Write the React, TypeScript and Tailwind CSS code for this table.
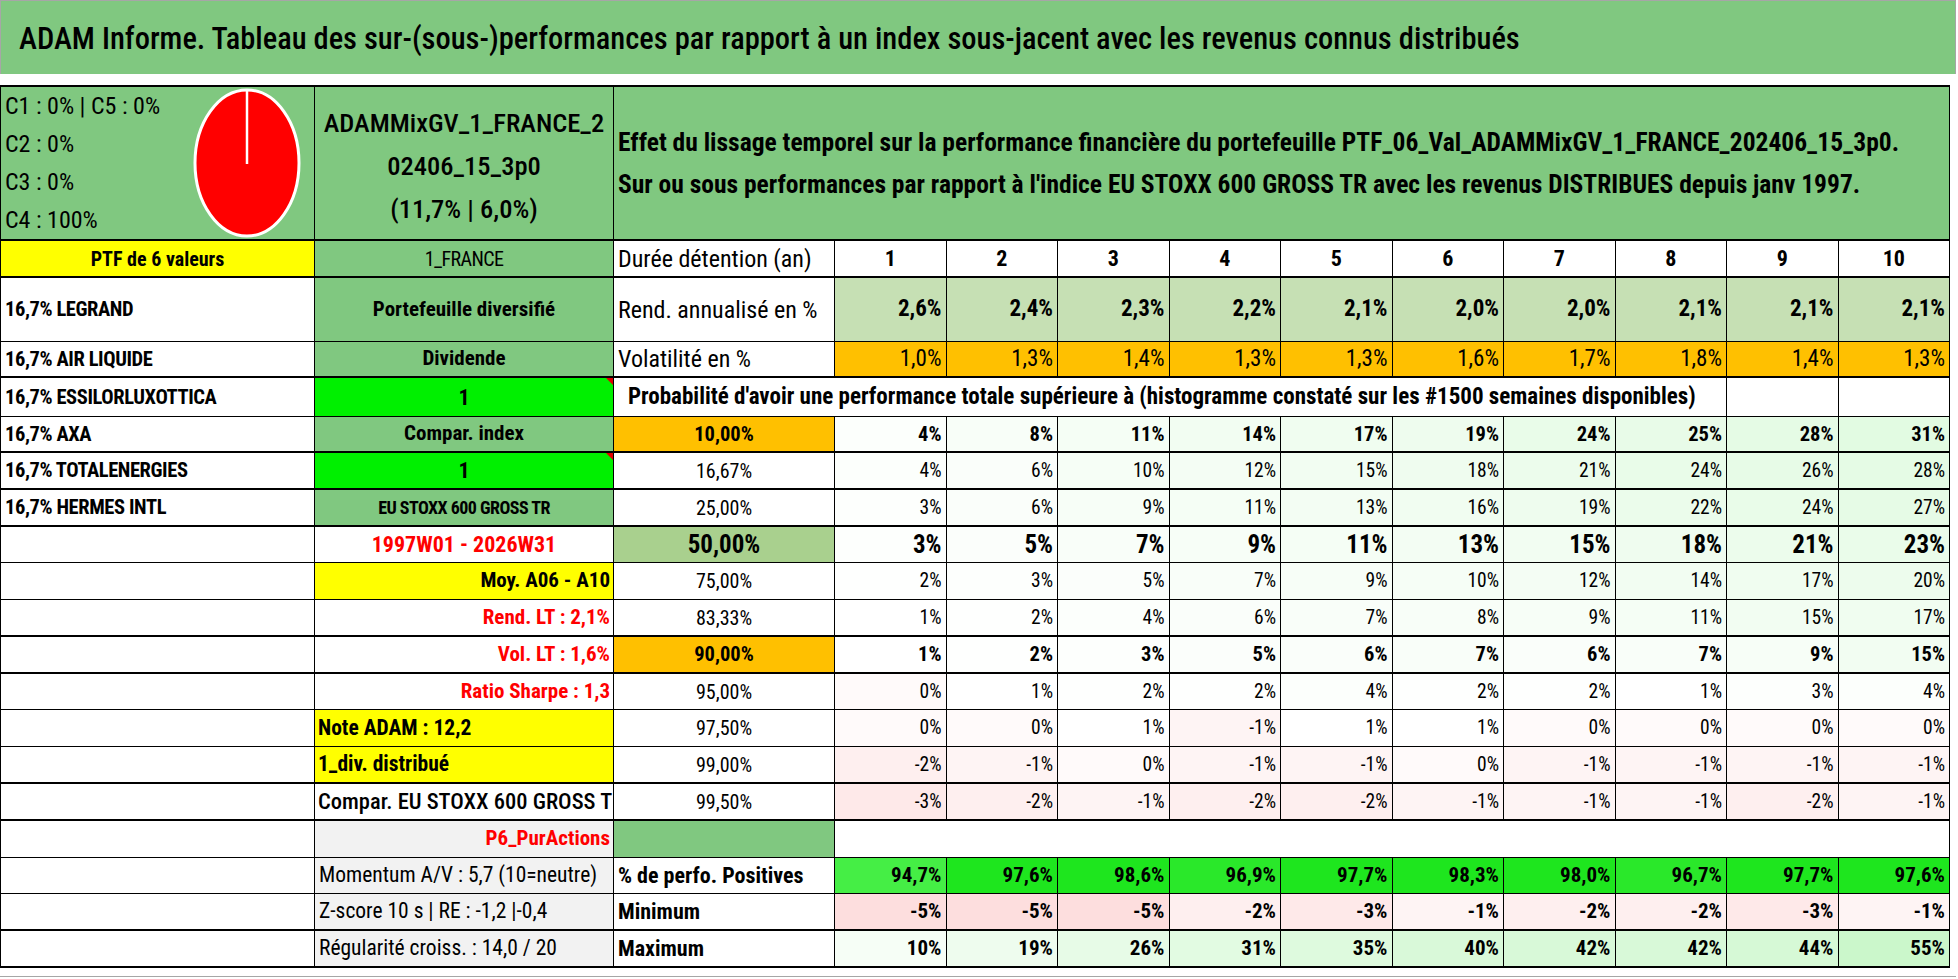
import React from "react";

const GRID =
  "grid grid-cols-[314px_299px_221px_repeat(10,minmax(0,1fr))]";

const rend = ["2,6%", "2,4%", "2,3%", "2,2%", "2,1%", "2,0%", "2,0%", "2,1%", "2,1%", "2,1%"];
const vol = ["1,0%", "1,3%", "1,4%", "1,3%", "1,3%", "1,6%", "1,7%", "1,8%", "1,4%", "1,3%"];

type ColB = {
  text: string;
  bg: string;
  align: string;
  tone: string;
  triangle?: boolean;
};

type ProbRow = {
  name: string;
  p: string;
  pBg: string;
  weight: "normal" | "bold" | "big";
  vals: number[];
  b: ColB;
  h: string;
  thick: boolean;
};

const RED_B = "font-bold text-[21px] text-[#ff0000]";
const BLK_B = "font-bold text-[21px]";
const NAME = "pl-[4px] font-bold text-[20.5px] tracking-[-0.02em]";

const probRows: ProbRow[] = [
  {
    name: "16,7% AXA",
    p: "10,00%",
    pBg: "bg-[#ffc000]",
    weight: "bold",
    vals: [4, 8, 11, 14, 17, 19, 24, 25, 28, 31],
    b: { text: "Compar. index", bg: "bg-[#80c880]", align: "justify-center", tone: BLK_B },
    h: "h-[36px]",
    thick: true,
  },
  {
    name: "16,7% TOTALENERGIES",
    p: "16,67%",
    pBg: "bg-white",
    weight: "normal",
    vals: [4, 6, 10, 12, 15, 18, 21, 24, 26, 28],
    b: { text: "1", bg: "bg-[#00f000]", align: "justify-center", tone: "font-bold text-[22px]", triangle: true },
    h: "h-[37px]",
    thick: true,
  },
  {
    name: "16,7% HERMES INTL",
    p: "25,00%",
    pBg: "bg-white",
    weight: "normal",
    vals: [3, 6, 9, 11, 13, 16, 19, 22, 24, 27],
    b: { text: "EU STOXX 600 GROSS TR", bg: "bg-[#80c880]", align: "justify-center", tone: "font-bold text-[18px] tracking-[-0.03em]" },
    h: "h-[37px]",
    thick: true,
  },
  {
    name: "",
    p: "50,00%",
    pBg: "bg-[#a9d08e]",
    weight: "big",
    vals: [3, 5, 7, 9, 11, 13, 15, 18, 21, 23],
    b: { text: "1997W01 - 2026W31", bg: "bg-white", align: "justify-center", tone: "font-bold text-[22px] text-[#ff0000]" },
    h: "h-[36px]",
    thick: false,
  },
  {
    name: "",
    p: "75,00%",
    pBg: "bg-white",
    weight: "normal",
    vals: [2, 3, 5, 7, 9, 10, 12, 14, 17, 20],
    b: { text: "Moy. A06 - A10", bg: "bg-[#ffff00]", align: "justify-end", tone: BLK_B },
    h: "h-[37px]",
    thick: false,
  },
  {
    name: "",
    p: "83,33%",
    pBg: "bg-white",
    weight: "normal",
    vals: [1, 2, 4, 6, 7, 8, 9, 11, 15, 17],
    b: { text: "Rend. LT : 2,1%", bg: "bg-white", align: "justify-end", tone: RED_B },
    h: "h-[37px]",
    thick: true,
  },
  {
    name: "",
    p: "90,00%",
    pBg: "bg-[#ffc000]",
    weight: "bold",
    vals: [1, 2, 3, 5, 6, 7, 6, 7, 9, 15],
    b: { text: "Vol. LT : 1,6%", bg: "bg-white", align: "justify-end", tone: RED_B },
    h: "h-[37px]",
    thick: true,
  },
  {
    name: "",
    p: "95,00%",
    pBg: "bg-white",
    weight: "normal",
    vals: [0, 1, 2, 2, 4, 2, 2, 1, 3, 4],
    b: { text: "Ratio Sharpe : 1,3", bg: "bg-white", align: "justify-end", tone: RED_B },
    h: "h-[36px]",
    thick: false,
  },
  {
    name: "",
    p: "97,50%",
    pBg: "bg-white",
    weight: "normal",
    vals: [0, 0, 1, -1, 1, 1, 0, 0, 0, 0],
    b: { text: "Note ADAM : 12,2", bg: "bg-[#ffff00]", align: "justify-start", tone: "font-bold text-[21.5px]" },
    h: "h-[37px]",
    thick: false,
  },
  {
    name: "",
    p: "99,00%",
    pBg: "bg-white",
    weight: "normal",
    vals: [-2, -1, 0, -1, -1, 0, -1, -1, -1, -1],
    b: { text: "1_div. distribué", bg: "bg-[#ffff00]", align: "justify-start", tone: "font-bold text-[21.5px]" },
    h: "h-[37px]",
    thick: true,
  },
  {
    name: "",
    p: "99,50%",
    pBg: "bg-white",
    weight: "normal",
    vals: [-3, -2, -1, -2, -2, -1, -1, -1, -2, -1],
    b: { text: "Compar. EU STOXX 600 GROSS TR", bg: "bg-white", align: "justify-start", tone: "font-medium text-[22.5px]" },
    h: "h-[37px]",
    thick: true,
  },
];

const bottomRows = [
  {
    b: "Momentum A/V : 5,7 (10=neutre)",
    c: "% de perfo. Positives",
    vals: ["94,7%", "97,6%", "98,6%", "96,9%", "97,7%", "98,3%", "98,0%", "96,7%", "97,7%", "97,6%"],
    kind: "pos",
    h: "h-[36px]",
    thick: false,
  },
  {
    b: "Z-score 10 s | RE : -1,2 |-0,4",
    c: "Minimum",
    vals: ["-5%", "-5%", "-5%", "-2%", "-3%", "-1%", "-2%", "-2%", "-3%", "-1%"],
    kind: "scale",
    h: "h-[37px]",
    thick: true,
  },
  {
    b: "Régularité croiss. : 14,0 / 20",
    c: "Maximum",
    vals: ["10%", "19%", "26%", "31%", "35%", "40%", "42%", "42%", "44%", "55%"],
    kind: "scale",
    h: "h-[37px]",
    thick: true,
  },
];

// Excel-like colour scale, white around 1 %
function scaleBg(v: number) {
  const d = v - 1;
  if (d >= 0) {
    const t = Math.min(d / 54, 1);
    return `rgb(${Math.round(255 - 52 * t)},${Math.round(255 - 8 * t)},${Math.round(255 - 52 * t)})`;
  }
  const t = Math.min(-d / 6, 1);
  return `rgb(${Math.round(255 - 2 * t)},${Math.round(255 - 33 * t)},${Math.round(255 - 33 * t)})`;
}

function posBg(v: number) {
  if (v < 95) return "#45ee45";
  if (v < 97) return "#2ae82a";
  return "#1ee61e";
}

const cell = "border-r border-black flex items-center overflow-hidden whitespace-nowrap";

function Triangle() {
  return (
    <span className="absolute top-0 right-0 w-0 h-0 border-t-[7px] border-l-[7px] border-t-[#e00000] border-l-transparent" />
  );
}

function Pie() {
  return (
    <svg width="110" height="152" viewBox="0 0 110 152" className="shrink-0">
      <ellipse cx="55" cy="76" rx="52" ry="73" fill="#ff0000" stroke="#ffffff" strokeWidth="3" />
      <line x1="55" y1="4" x2="55" y2="77" stroke="#ffffff" strokeWidth="2.5" />
    </svg>
  );
}

export default function App() {
  return (
    <div className="w-[1958px] h-[979px] bg-white text-black overflow-hidden font-['Roboto_Condensed','Liberation_Sans',sans-serif]">
      {/* Title */}
      <div className="w-[1956px] h-[74px] border-t border-l border-r border-[#a6a6a6] bg-[#80c880] flex items-center pl-[18px] pt-[2px] text-[30.5px] font-medium whitespace-nowrap">
        ADAM Informe. Tableau des sur-(sous-)performances par rapport à un index sous-jacent avec les revenus connus distribués
      </div>
      <div className="h-[11px]" />

      <div className="w-[1950px] border-l border-black">
        {/* Top block */}
        <div className={`${GRID} h-[156px] border-t-2 border-b-2 border-black`}>
          <div className={`${cell} bg-[#80c880] justify-between pl-[4px] pr-[12px]`}>
            <div className="flex flex-col gap-[10px] text-[24px] leading-[28px]">
              <span>C1 : 0% | C5 : 0%</span>
              <span>C2 : 0%</span>
              <span>C3 : 0%</span>
              <span>C4 : 100%</span>
            </div>
            <Pie />
          </div>
          <div className={`${cell} bg-[#80c880] flex-col justify-center text-[26.5px] font-medium leading-[43px] pt-[4px]`}>
            <span>ADAMMixGV_1_FRANCE_2</span>
            <span>02406_15_3p0</span>
            <span>(11,7% | 6,0%)</span>
          </div>
          <div className={`${cell} col-span-11 bg-[#80c880] flex-col items-start justify-center pl-[4px] font-bold text-[25.5px] leading-[42px]`}>
            <span>
              Effet du lissage temporel sur la performance financière du portefeuille PTF_06_Val_ADAMMixGV_1_FRANCE_202406_15_3p0.
            </span>
            <span>
              Sur ou sous performances par rapport à l'indice EU STOXX 600 GROSS TR avec les revenus DISTRIBUES depuis janv 1997.
            </span>
          </div>
        </div>

        {/* Header row */}
        <div className={`${GRID} h-[37px] border-b-2 border-black`}>
          <div className={`${cell} bg-[#ffff00] justify-center font-bold text-[20px]`}>PTF de 6 valeurs</div>
          <div className={`${cell} bg-[#80c880] justify-center text-[20px] tracking-[-0.03em]`}>1_FRANCE</div>
          <div className={`${cell} pl-[4px] text-[24px]`}>Durée détention (an)</div>
          {Array.from({ length: 10 }, (_, i) => (
            <div key={i} className={`${cell} justify-center font-bold text-[22px]`}>
              {i + 1}
            </div>
          ))}
        </div>

        {/* Rendement */}
        <div className={`${GRID} h-[64px] border-b border-black`}>
          <div className={`${cell} ${NAME}`}>16,7% LEGRAND</div>
          <div className={`${cell} bg-[#80c880] justify-center ${BLK_B}`}>Portefeuille diversifié</div>
          <div className={`${cell} pl-[4px] text-[24px]`}>Rend. annualisé en %</div>
          {rend.map((v, i) => (
            <div key={i} className={`${cell} bg-[#c6e0b4] justify-end pr-[4px] font-bold text-[23px]`}>
              {v}
            </div>
          ))}
        </div>

        {/* Volatilité */}
        <div className={`${GRID} h-[36px] border-b-2 border-black`}>
          <div className={`${cell} ${NAME}`}>16,7% AIR LIQUIDE</div>
          <div className={`${cell} bg-[#80c880] justify-center ${BLK_B}`}>Dividende</div>
          <div className={`${cell} pl-[4px] text-[24px]`}>Volatilité en %</div>
          {vol.map((v, i) => (
            <div key={i} className={`${cell} bg-[#ffc000] justify-end pr-[4px] text-[23px]`}>
              {v}
            </div>
          ))}
        </div>

        {/* Probabilité header */}
        <div className={`${GRID} h-[39px] border-b border-black`}>
          <div className={`${cell} ${NAME}`}>16,7% ESSILORLUXOTTICA</div>
          <div className={`${cell} relative bg-[#00f000] justify-center font-bold text-[22px]`}>
            1
            <Triangle />
          </div>
          <div className={`${cell} col-span-9 pl-[14px] font-bold text-[23px]`}>
            Probabilité d'avoir une performance totale supérieure à (histogramme constaté sur les #1500 semaines disponibles)
          </div>
          <div className={cell} />
          <div className={cell} />
        </div>

        {/* Probability table */}
        {probRows.map((r) => {
          const num =
            r.weight === "big"
              ? "font-bold text-[25px]"
              : r.weight === "bold"
                ? "font-bold text-[20.5px]"
                : "text-[19.5px]";
          const pct =
            r.weight === "big"
              ? "font-bold text-[25px]"
              : r.weight === "bold"
                ? "font-bold text-[20.5px]"
                : "text-[20px]";
          return (
            <div
              key={r.p}
              className={`${GRID} ${r.h} ${r.thick ? "border-b-2" : "border-b"} border-black`}
            >
              <div className={`${cell} ${NAME}`}>{r.name}</div>
              <div className={`${cell} relative ${r.b.bg} ${r.b.align} px-[3px] ${r.b.tone}`}>
                {r.b.text}
                {r.b.triangle && <Triangle />}
              </div>
              <div className={`${cell} ${r.pBg} justify-center ${pct}`}>{r.p}</div>
              {r.vals.map((v, i) => (
                <div
                  key={i}
                  className={`${cell} justify-end pr-[4px] ${num}`}
                  style={{ backgroundColor: scaleBg(v) }}
                >
                  {v}%
                </div>
              ))}
            </div>
          );
        })}

        {/* P6 row */}
        <div className={`${GRID} h-[37px] border-b border-black`}>
          <div className={cell} />
          <div className={`${cell} bg-[#f2f2f2] justify-end px-[3px] font-bold text-[21px] text-[#ff0000]`}>
            P6_PurActions
          </div>
          <div className={`${cell} bg-[#80c880]`} />
          <div className={`${cell} col-span-10`} />
        </div>

        {/* Bottom stats */}
        {bottomRows.map((r) => (
          <div
            key={r.c}
            className={`${GRID} ${r.h} ${r.thick ? "border-b-2" : "border-b"} border-black`}
          >
            <div className={cell} />
            <div className={`${cell} bg-[#f2f2f2] pl-[4px] text-[21.5px]`}>{r.b}</div>
            <div className={`${cell} pl-[4px] font-bold text-[22px]`}>{r.c}</div>
            {r.vals.map((v, i) => {
              const n = parseFloat(v.replace(",", "."));
              return (
                <div
                  key={i}
                  className={`${cell} justify-end pr-[4px] font-bold text-[21px]`}
                  style={{ backgroundColor: r.kind === "pos" ? posBg(n) : scaleBg(n) }}
                >
                  {v}
                </div>
              );
            })}
          </div>
        ))}
      </div>
      <div className="w-[1956px] h-[9px] border-b border-[#a6a6a6]" />
    </div>
  );
}
